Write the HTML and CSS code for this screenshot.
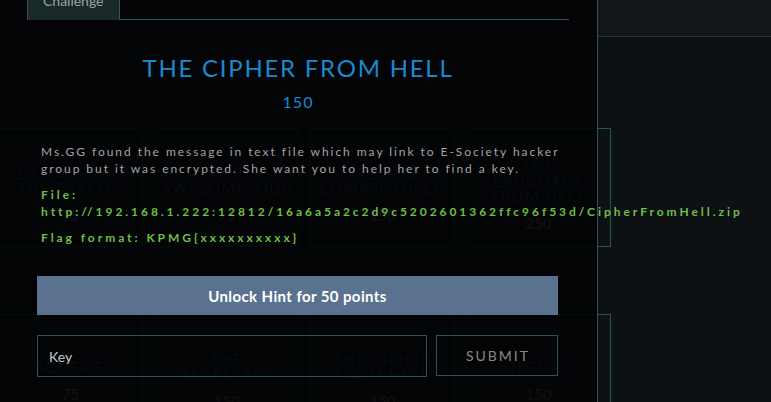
FILE: index.html
```html
<!DOCTYPE html>
<html lang="en">
<head>
<meta charset="utf-8">
<title>The Cipher From Hell</title>
<link rel="stylesheet" href="styles.css">
</head>
<body>
<div class="page">
  <header class="navbar"></header>
  <main class="board">
    <div class="grid">
      <div class="card"><div class="card-name">Decrypting the traffic</div><div class="card-val">75</div></div>
      <div class="card"><div class="card-name">The awesomesoup</div><div class="card-val">75</div></div>
      <div class="card"><div class="card-name">Are you compromised</div><div class="card-val">150</div></div>
      <div class="card"><div class="card-name">The language from hell</div><div class="card-val">250</div></div>
      <div class="card"><div class="card-name">Scheme</div><div class="card-val">75</div></div>
      <div class="card"><div class="card-name">The secretfly</div><div class="card-val">150</div></div>
      <div class="card"><div class="card-name">The cipher from hell</div><div class="card-val">150</div></div>
      <div class="card"><div class="card-name">Openne</div><div class="card-val">150</div></div>
    </div>
  </main>
</div>

<div class="modal">
  <ul class="tabs">
    <li class="tab">Challenge</li>
  </ul>
  <h3 class="title">The Cipher From Hell</h3>
  <div class="points">150</div>
  <div class="desc">
    <p>Ms.GG found the message in text file which may link to E-Society hacker group but it was encrypted. She want you to help her to find a key.</p>
    <p class="green">File: http://192.168.1.222:12812/16a6a5a2c2d9c5202601362ffc96f53d/CipherFromHell.zip</p>
    <p class="green">Flag format: KPMG{xxxxxxxxxx}</p>
  </div>
  <button class="hint">Unlock Hint for 50 points</button>
  <div class="submit-row">
    <input class="key" type="text" placeholder="Key">
    <button class="submit">Submit</button>
  </div>
</div>
</body>
</html>
```

FILE: styles.css
```css
* { box-sizing: border-box; }

html, body {
  margin: 0;
  padding: 0;
}

body {
  width: 771px;
  height: 402px;
  overflow: hidden;
  position: relative;
  background: #0e1114;
  font-family: Lato, "Open Sans", "Liberation Sans", sans-serif;
}

/* ---------- background board ---------- */
.navbar {
  height: 37px;
  background: #121519;
  border-bottom: 1px solid #1d3838;
}

.board {
  padding-top: 91px;
}

.grid {
  display: grid;
  grid-template-columns: repeat(4, 145px);
  column-gap: 11px;
  row-gap: 67px;
  margin-left: -2px;
}

.card {
  height: 119px;
  border: 1px solid #1f5c42;
  display: flex;
  flex-direction: column;
  align-items: center;
  justify-content: center;
  padding: 14px 10px 0;
  text-align: center;
}

.card-name {
  color: #27405e;
  text-transform: uppercase;
  font-size: 15px;
  line-height: 15px;
  letter-spacing: 1.3px;
}

.card-val {
  color: #646464;
  font-weight: 700;
  font-size: 15px;
  line-height: 15px;
  margin-top: 12px;
}

/* ---------- modal ---------- */
.modal {
  position: absolute;
  left: 0;
  top: -18px;
  width: 598px;
  height: 440px;
  padding: 0 28px 0 27px;
  background: rgba(2, 2, 4, 0.88);
  border-right: 1px solid #2b5757;
}

.tabs {
  list-style: none;
  margin: 0;
  padding: 0;
  display: flex;
  border-bottom: 1px solid #2e5858;
}

.tab {
  padding: 8px 15px 9px;
  line-height: 20px;
  font-size: 14px;
  color: #9aa3a3;
  background: #1a2a2b;
  border: 1px solid #2e5858;
  border-bottom: none;
  margin-bottom: -1px;
}

.title {
  margin: 33px 0 0;
  text-align: center;
  font-weight: 400;
  font-size: 24px;
  line-height: 29px;
  letter-spacing: 1.75px;
  color: #1b88d0;
  text-transform: uppercase;
}

.points {
  margin-top: 10px;
  text-align: center;
  font-size: 16px;
  line-height: 20px;
  letter-spacing: 1px;
  color: #1b88d0;
}

.desc {
  margin-top: 31px;
  padding: 0 6px 0 14px;
  font-size: 12px;
  line-height: 17px;
  letter-spacing: 1.95px;
  color: #a3a3a3;
}

.desc p {
  margin: 0 0 9px;
}

.desc .green {
  color: #6fbf45;
  font-weight: 700;
  letter-spacing: 2.95px;
}

.hint {
  display: block;
  width: 521px;
  height: 39px;
  margin: 30px 0 0 10px;
  border: none;
  background: #5b7190;
  color: #ffffff;
  font-family: Lato, "Open Sans", sans-serif;
  font-weight: 700;
  font-size: 15px;
  letter-spacing: 0.4px;
}

.submit-row {
  display: flex;
  gap: 9px;
  margin: 20px 0 0 10px;
  width: 521px;
}

.key {
  width: 390px;
  height: 42px;
  padding: 0 11px;
  background: transparent;
  border: 1px solid #2d5454;
  color: #c8c8c8;
  font-family: Lato, "Open Sans", sans-serif;
  font-size: 14px;
  outline: none;
}

.key::placeholder {
  color: #c8c8c8;
}

.submit {
  width: 122px;
  height: 41px;
  background: transparent;
  border: 1px solid #2d5454;
  color: #8a8a8a;
  font-family: Lato, "Open Sans", sans-serif;
  font-size: 14px;
  letter-spacing: 2px;
  text-transform: uppercase;
  padding: 0 0 0 2px;
}
```
